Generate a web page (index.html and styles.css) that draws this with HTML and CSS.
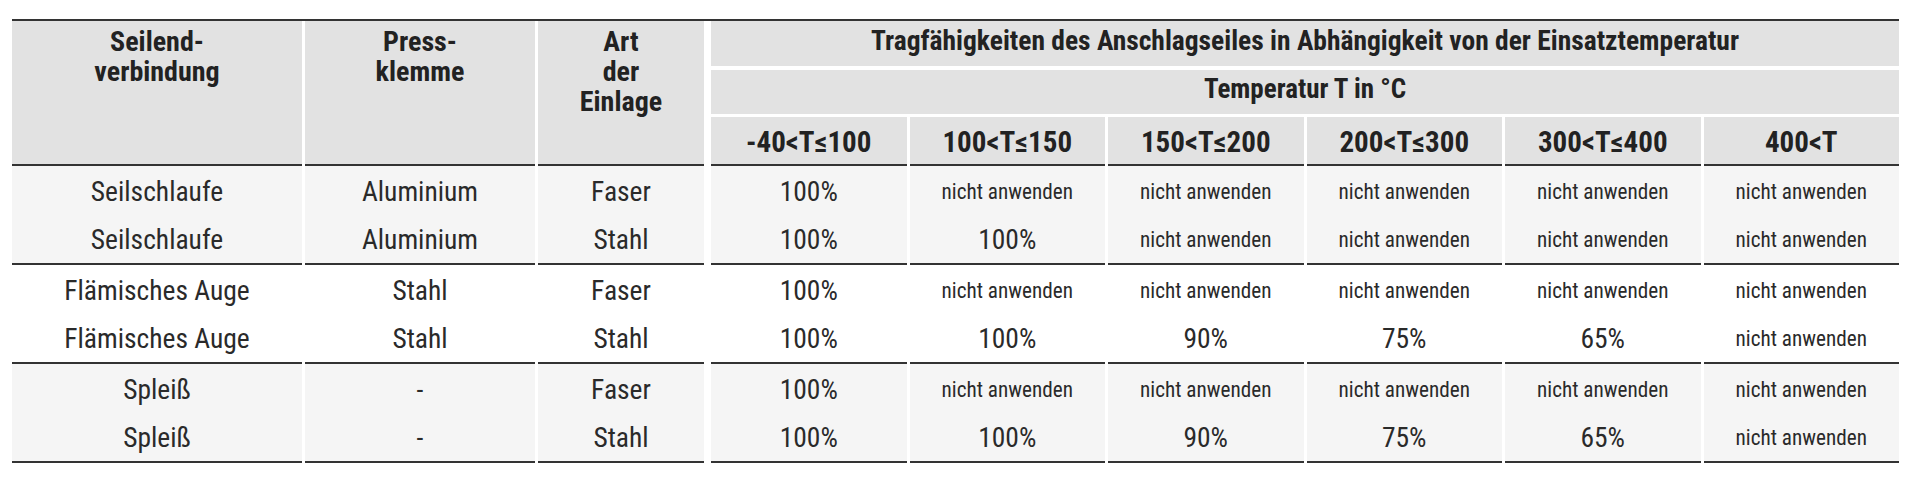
FILE: index.html
```html
<!DOCTYPE html>
<html lang="de">
<head>
<meta charset="utf-8">
<title>Tragfähigkeiten</title>
<link rel="stylesheet" href="styles.css">
</head>
<body>
<div class="wrap">
  <table class="tbl">
    <colgroup>
      <col class="c-a"><col class="c-b"><col class="c-c"><col class="c-sp">
      <col class="c-t"><col class="c-t"><col class="c-t"><col class="c-t"><col class="c-t"><col class="c-t">
    </colgroup>
    <thead>
      <tr class="h1">
        <th rowspan="3" class="hmain">Seilend-<br>verbindung</th>
        <th rowspan="3" class="hmain">Press-<br>klemme</th>
        <th rowspan="3" class="hmain">Art<br>der<br>Einlage</th>
        <th rowspan="3" class="sp"></th>
        <th colspan="6" class="htitle">Tragfähigkeiten des Anschlagseiles in Abhängigkeit von der Einsatztemperatur</th>
      </tr>
      <tr class="h2">
        <th colspan="6" class="hsub">Temperatur T in °C</th>
      </tr>
      <tr class="h3">
        <th class="htemp">-40&lt;T≤100</th>
        <th class="htemp">100&lt;T≤150</th>
        <th class="htemp">150&lt;T≤200</th>
        <th class="htemp">200&lt;T≤300</th>
        <th class="htemp">300&lt;T≤400</th>
        <th class="htemp">400&lt;T</th>
      </tr>
    </thead>
    <tbody class="grp shade">
      <tr class="r1">
        <td>Seilschlaufe</td><td>Aluminium</td><td>Faser</td><td class="sp"></td>
        <td>100%</td><td class="na">nicht anwenden</td><td class="na">nicht anwenden</td><td class="na">nicht anwenden</td><td class="na">nicht anwenden</td><td class="na">nicht anwenden</td>
      </tr>
      <tr class="r2">
        <td>Seilschlaufe</td><td>Aluminium</td><td>Stahl</td><td class="sp"></td>
        <td>100%</td><td>100%</td><td class="na">nicht anwenden</td><td class="na">nicht anwenden</td><td class="na">nicht anwenden</td><td class="na">nicht anwenden</td>
      </tr>
    </tbody>
    <tbody class="grp">
      <tr class="r1">
        <td>Flämisches Auge</td><td>Stahl</td><td>Faser</td><td class="sp"></td>
        <td>100%</td><td class="na">nicht anwenden</td><td class="na">nicht anwenden</td><td class="na">nicht anwenden</td><td class="na">nicht anwenden</td><td class="na">nicht anwenden</td>
      </tr>
      <tr class="r2">
        <td>Flämisches Auge</td><td>Stahl</td><td>Stahl</td><td class="sp"></td>
        <td>100%</td><td>100%</td><td>90%</td><td>75%</td><td>65%</td><td class="na">nicht anwenden</td>
      </tr>
    </tbody>
    <tbody class="grp shade">
      <tr class="r1">
        <td>Spleiß</td><td>-</td><td>Faser</td><td class="sp"></td>
        <td>100%</td><td class="na">nicht anwenden</td><td class="na">nicht anwenden</td><td class="na">nicht anwenden</td><td class="na">nicht anwenden</td><td class="na">nicht anwenden</td>
      </tr>
      <tr class="r2">
        <td>Spleiß</td><td>-</td><td>Stahl</td><td class="sp"></td>
        <td>100%</td><td>100%</td><td>90%</td><td>75%</td><td>65%</td><td class="na">nicht anwenden</td>
      </tr>
    </tbody>
  </table>
</div>
</body>
</html>
```
FILE: styles.css
```css
html, body {
  background: #ffffff;
}
body {
  margin: 8px;
  font-family: "Roboto Condensed", "Roboto", "Liberation Sans", sans-serif;
  color: #222222;
}
.wrap {
  margin: 11px 0 0 4px;
  width: 1887px;
  border-top: 2px solid #333333;
}
.tbl {
  margin: 0 -3px;
  width: 1893px;
  table-layout: fixed;
  border-collapse: separate;
  border-spacing: 3px 0;
}
.c-a { width: 290px; }
.c-b { width: 230px; }
.c-c { width: 166px; }
.c-sp { width: 1px; }
.c-t { width: 195.5px; }

th, td {
  padding: 0;
  text-align: center;
}
th {
  background: #e2e2e2;
  font-weight: 700;
  font-size: 27.5px;
  line-height: 30px;
  color: #222222;
  vertical-align: top;
}
th.sp, td.sp {
  background: transparent;
  border: 0;
}
.hmain {
  font-size: 28px;
  padding-top: 6px;
  border-bottom: 2px solid #333333;
}
.h1 { height: 49px; }
.htitle {
  height: 45px;
  padding-top: 5px;
  box-sizing: border-box;
  border-bottom: 4px solid #ffffff;
}
.h2 { height: 47px; }
.hsub {
  font-size: 27px;
  padding-top: 4px;
  border-bottom: 3px solid #ffffff;
}
.h3 { height: 49px; }
.htemp {
  font-size: 29px;
  padding-top: 10px;
  border-bottom: 2px solid #333333;
}

td {
  font-size: 27.5px;
  line-height: 30px;
  color: #2a2a2a;
  vertical-align: middle;
  background: #ffffff;
  padding-top: 3px;
}
.shade td {
  background: #f5f5f5;
}
.shade td.sp {
  background: transparent;
}
td.na {
  font-size: 21.2px;
}
.r1 { height: 48px; }
.r2 { height: 51px; }
.r2 td {
  border-bottom: 2px solid #333333;
}
.r2 td.sp {
  border-bottom: 0;
}
```
